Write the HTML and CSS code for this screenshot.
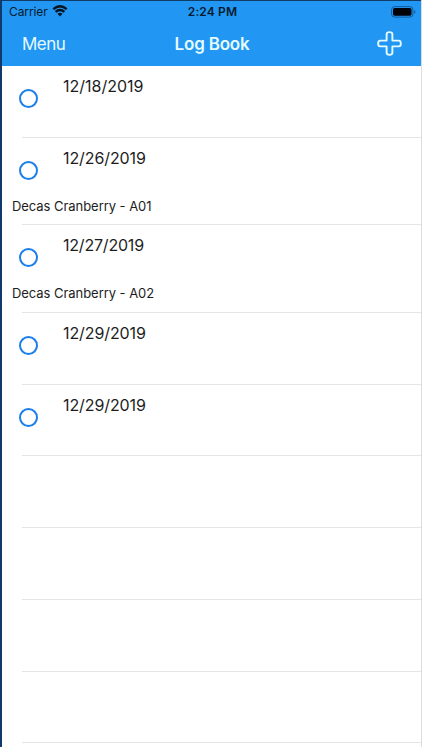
FILE: index.html
```html
<!DOCTYPE html>
<html lang="en">
<head>
<meta charset="utf-8">
<title>Log Book</title>
<link rel="stylesheet" href="styles.css">
</head>
<body>
<div class="phone">
  <header class="header">
    <div class="status">
      <div class="carrier"><span>Carrier</span>
        <svg class="wifi" width="16" height="12" viewBox="0 0 15 12" fill="none" stroke="#071521" stroke-width="2.3"><path d="M.8 4.2Q7.5-1.8 14.2 4.2M3.1 6.9Q7.5 3 11.9 6.9"/><path d="M5 8.8Q7.5 6.7 10 8.8L7.5 11.4Z" fill="#071521" stroke="none"/></svg>
      </div>
      <div class="time">2:24 PM</div>
      <svg class="battery" width="25" height="12" viewBox="0 0 25 12"><rect x=".6" y=".6" width="21.3" height="10.5" rx="3" fill="none" stroke="#125a98"/><rect x="2" y="2" width="18.5" height="7.7" rx="1.6" fill="#000208"/><path d="M23.2 4v3.8q1.2-.5 1.2-1.9T23.2 4" fill="#125a98"/></svg>
    </div>
    <nav class="nav">
      <span class="menu">Menu</span>
      <h1 class="title">Log Book</h1>
      <svg class="plus" width="25" height="25" viewBox="0 0 26 26" fill="none" stroke="#e4fbff" stroke-width="2"><path d="M10 3.3Q10 1.2 13 1.2T16 3.3V10H22.7Q24.8 10 24.8 13T22.7 16H16V22.7Q16 24.8 13 24.8T10 22.7V16H3.3Q1.2 16 1.2 13T3.3 10H10Z" stroke-linejoin="round"/></svg>
    </nav>
  </header>
  <main class="list">
    <section class="row"><div class="entry"><i class="ring"></i><span class="date first">12/18/2019</span></div></section>
    <section class="row tall"><div class="entry"><i class="ring"></i><span class="date">12/26/2019</span></div><p class="detail">Decas Cranberry - A01</p></section>
    <section class="row tall"><div class="entry"><i class="ring"></i><span class="date narrow">12/27/2019</span></div><p class="detail">Decas Cranberry - A02</p></section>
    <section class="row"><div class="entry"><i class="ring"></i><span class="date">12/29/2019</span></div></section>
    <section class="row"><div class="entry"><i class="ring"></i><span class="date">12/29/2019</span></div></section>
    <section class="row"></section>
    <section class="row"></section>
    <section class="row"></section>
    <section class="row"></section>
  </main>
</div>
</body>
</html>
```
FILE: styles.css
```css
* { box-sizing: border-box; }
body { margin: 0; background: #fff; font-family: Inter, "Liberation Sans", sans-serif; }
.phone { height: 747px; overflow: hidden; border-left: 2px solid #12396c; border-right: 1px solid #dcdcdc; background: #fff; }
.header { height: 66px; background: #2196f3; border-top: 1px solid #103c66; }
.status { height: 21px; display: grid; grid-template-columns: 1fr auto 1fr; align-items: center; padding: 0 5px 0 7px; color: #071b2e; font-size: 12px; line-height: 21px; }
.carrier { display: flex; align-items: center; gap: 4px; letter-spacing: -.1px; }
.wifi { margin-top: -1px; }
.time { font-weight: 600; font-size: 12px; letter-spacing: .15px; }
.battery { justify-self: end; }
.nav { height: 44px; display: grid; grid-template-columns: 1fr auto 1fr; align-items: center; padding: 0 19px 0 20px; color: #e4fbff; }
.menu { font-size: 17px; letter-spacing: -.5px; }
.title { margin: 0; font-size: 17px; font-weight: 600; letter-spacing: -.2px; }
.plus { justify-self: end; margin-top: -1px; }
.list { color: #1d1d1d; }
.row { height: 71.7px; display: flex; flex-direction: column; background: linear-gradient(#e5e5e5, #e5e5e5) 20px 100% / 100% 1px no-repeat; }
.row.tall { height: 87.7px; }
.entry { display: flex; align-items: flex-start; padding: 10px 0 0 17px; gap: 25px; height: 60px; }
.ring { width: 19px; height: 19px; margin-top: 13px; border: 2px solid #1c7eeb; border-radius: 50%; }
.date { font-size: 16px; line-height: 20px; letter-spacing: -.1px; }
.date.first { letter-spacing: 0; }
.date.narrow { letter-spacing: -.2px; }
.detail { margin: 0 0 0 10px; font-size: 13px; line-height: 16px; letter-spacing: -.05px; }
```
